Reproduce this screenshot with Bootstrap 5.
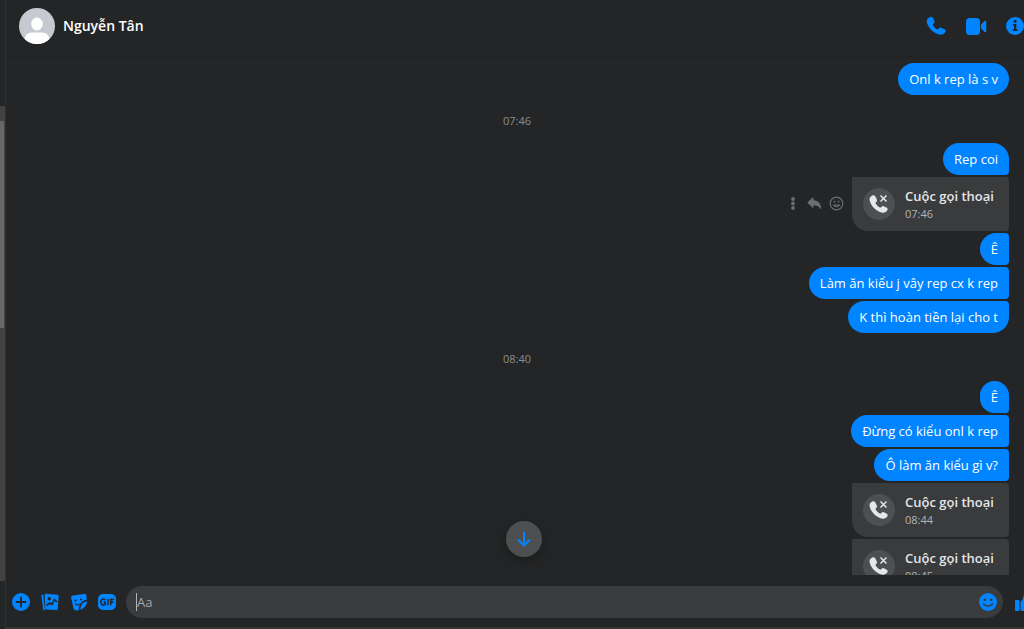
<!DOCTYPE html>
<html lang="vi" data-bs-theme="dark">
<head>
<meta charset="utf-8">
<meta name="viewport" content="width=device-width, initial-scale=1">
<title>Nguyễn Tân</title>
<link href="https://cdn.jsdelivr.net/npm/bootstrap@5.3.0/dist/css/bootstrap.min.css" rel="stylesheet">
<style>
  :root { --chat-bg: #242526; --chat-blue: #0084ff; --chat-grey: #3a3b3c; --chat-text: #e4e6eb; }
  body { background: var(--chat-bg); color: var(--chat-text); font-family: "Open Sans", "Noto Sans", sans-serif; font-size: 13px; line-height: 20px; }
  svg { display: block; }
  .icon-btn { background: none; border: 0; padding: 0; color: var(--chat-blue); flex: none; }
  .rail { width: 6px; border-right: 1px solid #303132; flex: none; }
  .rail-track { width: 5px; margin-top: 106px; margin-bottom: 48px; padding-top: 15px; background: #424242; }
  .rail-thumb { height: 45%; width: 4px; background: #686868; }
  .chat-head { height: 56px; padding: 0 0 4px 13px; box-shadow: 0 1px 2px rgba(0, 0, 0, .1); z-index: 1; }
  .chat-name { font-size: 14px; font-weight: 600; margin: 0 0 0 8px; line-height: 20px; }
  .head-tools { gap: 18px; }
  .log { padding: 7px 15px 0 0; gap: 2px; }
  .bubble { background: var(--chat-blue); color: #fff; padding: 6px 11px; border-radius: 16px 4px 4px 16px; flex: none; }
  .bubble.solo { border-radius: 16px; }
  .bubble.first { border-top-right-radius: 16px; }
  .bubble.last { border-bottom-right-radius: 16px; }
  .stamp { font-size: 11px; font-weight: 500; line-height: 16px; color: #8a8d91; padding: 16px 0 12px 19px; flex: none; align-self: center; }
  .call { background: var(--chat-grey); width: 157px; height: 54px; padding: 0 11px 1px; gap: 10px; border-radius: 0 4px 4px 16px; }
  .call-icon { width: 32px; height: 32px; background: #4e4f50; color: var(--chat-text); flex: none; }
  .call-title { font-weight: 600; line-height: 20px; white-space: nowrap; }
  .call-time { font-size: 11px; line-height: 16px; color: #b0b3b8; }
  .row-tools { gap: 7px; margin-right: 8px; }
  .row-tools .icon-btn { color: #6c6e70; }
  .to-latest { position: absolute; left: 50%; bottom: 18px; margin-left: -9px; width: 36px; height: 36px; background: #4e4f50; border: 0; color: var(--chat-blue); box-shadow: 0 4px 12px rgba(0, 0, 0, .25); }
  .composer { height: 54px; padding: 2px 0 0 5px; gap: 9px; border-bottom: 2px solid #343536; }
  .entry { background: var(--chat-grey); height: 32px; padding: 0 5px 0 10px; margin: 0 2px 0 0; }
  .entry input { background: none; border: 0; outline: 0; padding: 0; color: var(--chat-text); min-width: 0; font-size: 13px; border-left: 1px solid #b0b3b8; height: 18px; }
  .entry input::placeholder { color: #a4a7ab; opacity: 1; }
  .like { margin-right: -10px; }
</style>
</head>
<body>
<div class="d-flex vh-100 overflow-hidden">
  <div class="rail d-flex"><div class="rail-track"><div class="rail-thumb"></div></div></div>

  <main class="d-flex flex-column flex-grow-1 overflow-hidden">
    <header class="chat-head d-flex align-items-center flex-shrink-0 position-relative">
      <svg width="36" height="36" viewBox="0 0 36 36" aria-hidden="true">
        <defs><clipPath id="face"><circle cx="18" cy="18" r="18"/></clipPath></defs>
        <g clip-path="url(#face)"><path fill="#c6c9cf" d="M0 0h36v36H0z"/><ellipse cx="18" cy="16" rx="5.8" ry="6.5" fill="#fff"/><path fill="#fff" d="M5 36c0-8 3-11.500 8-11.500h10c5 0 8 3.500 8 11.500z"/></g>
      </svg>
      <h1 class="chat-name">Nguyễn Tân</h1>
      <div class="head-tools d-flex align-items-center ms-auto">
        <button class="icon-btn" type="button" aria-label="Gọi thoại">
          <svg width="22" height="22" viewBox="0 0 22 22" fill="currentColor"><path d="M4.500 2.300C6 1.300 7.500 1.700 8.300 3.500l1 2.300c.6 1.300.3 2-.7 2.800-.9.800-.9 1.200-.4 2 .9 1.500 1.900 2.500 3.400 3.500.9.600 1.300.5 2-.4.900-1.200 1.600-1.400 2.900-.8l2.700 1.200c1.600.8 1.900 2.100.8 3.500-1.500 2-3.700 2.700-6.100 1.900C8.200 17.700 3.800 13.500 2 8c-.8-2.500-.1-4.400 2.500-5.700z"/></svg>
        </button>
        <button class="icon-btn" type="button" aria-label="Gọi video">
          <svg width="22" height="22" viewBox="0 0 22 22" fill="currentColor"><rect x="1" y="3" width="14" height="17" rx="3.500"/><path d="M16 9.500l3.700-3.500c.6-.6 1.500-.4 1.500.5v10c0 .9-.9 1.100-1.500.5L16 13.500z"/></svg>
        </button>
        <button class="icon-btn" type="button" aria-label="Thông tin">
          <svg width="19" height="22" viewBox="0 0 19 22"><circle cx="10" cy="11" r="9" fill="currentColor"/><path fill="#242526" d="M8 9h3.300v5.200h1V16H7.800v-1.800H9v-3.400H8z"/><circle cx="10.100" cy="6.300" r="1.500" fill="#242526"/></svg>
        </button>
      </div>
    </header>

    <section class="position-relative flex-grow-1 overflow-hidden d-flex flex-column">
      <div class="log d-flex flex-column align-items-end">
        <div class="bubble solo">Onl k rep là s v</div>
        <time class="stamp">07:46</time>
        <div class="bubble first">Rep coi</div>
        <div class="d-flex align-items-center flex-shrink-0">
          <div class="row-tools d-flex align-items-center">
            <button class="icon-btn" type="button" aria-label="Xem thêm"><svg width="14" height="16" viewBox="0 0 14 16" fill="currentColor"><circle cx="7" cy="3" r="1.900"/><circle cx="7" cy="7.500" r="1.900"/><circle cx="7" cy="12" r="1.900"/></svg></button>
            <button class="icon-btn" type="button" aria-label="Trả lời"><svg width="15" height="16" viewBox="0 0 15 16" fill="currentColor"><path d="M6.500 2.300c0-.7-.6-.9-1.100-.5L.8 6.100c-.4.400-.4.800 0 1.200l4.600 4.200c.5.500 1.100.2 1.100-.5V9.300c3 0 5.200.8 6.600 3.300.3.600 1 .4 1-.3C13.900 7.500 11.300 4.500 6.500 4.200z"/></svg></button>
            <button class="icon-btn" type="button" aria-label="Bày tỏ cảm xúc"><svg width="15" height="16" viewBox="0 0 15 16" fill="none" stroke="currentColor" stroke-width="1.200"><circle cx="7.500" cy="7.500" r="6.300"/><path d="M4.500 9c1.300 2.200 4.700 2.200 6 0z"/><path d="M5.500 4.800v1.800M9.500 4.800v1.800" stroke-width="1.500"/></svg></button>
          </div>
          <div class="call d-flex align-items-center">
            <div class="call-icon rounded-circle d-flex align-items-center justify-content-center"><svg width="20" height="20" viewBox="0 0 20 20"><use href="#missed"/></svg></div>
            <div><div class="call-title">Cuộc gọi thoại</div><div class="call-time">07:46</div></div>
          </div>
        </div>
        <div class="bubble">Ê</div>
        <div class="bubble">Làm ăn kiểu j vây rep cx k rep</div>
        <div class="bubble last">K thì hoàn tiền lại cho t</div>
        <time class="stamp">08:40</time>
        <div class="bubble first">Ê</div>
        <div class="bubble">Đừng có kiểu onl k rep</div>
        <div class="bubble">Ô làm ăn kiểu gì v?</div>
        <div class="call d-flex align-items-center flex-shrink-0">
          <div class="call-icon rounded-circle d-flex align-items-center justify-content-center"><svg width="20" height="20" viewBox="0 0 20 20"><use href="#missed"/></svg></div>
          <div><div class="call-title">Cuộc gọi thoại</div><div class="call-time">08:44</div></div>
        </div>
        <div class="call d-flex align-items-center flex-shrink-0">
          <div class="call-icon rounded-circle d-flex align-items-center justify-content-center"><svg width="20" height="20" viewBox="0 0 20 20"><use href="#missed"/></svg></div>
          <div><div class="call-title">Cuộc gọi thoại</div><div class="call-time">08:45</div></div>
        </div>
      </div>
      <button class="to-latest rounded-circle d-flex align-items-center justify-content-center p-0" type="button" aria-label="Xuống tin nhắn mới nhất">
        <svg width="16" height="16" viewBox="0 0 16 16" fill="none" stroke="currentColor" stroke-width="2" stroke-linecap="round" stroke-linejoin="round"><path d="M8 1.500v13M2.500 9L8 14.500 13.500 9"/></svg>
      </button>
    </section>

    <form class="composer d-flex align-items-center flex-shrink-0">
      <button class="icon-btn" type="button" aria-label="Thêm"><svg width="20" height="20" viewBox="0 0 20 20"><circle cx="10" cy="10" r="9" fill="currentColor"/><path d="M10 5.500v9M5.500 10h9" stroke="#242526" stroke-width="1.800" stroke-linecap="round"/></svg></button>
      <button class="icon-btn" type="button" aria-label="Ảnh"><svg width="20" height="20" viewBox="0 0 20 20"><path d="M2.300 3.500L4 17.500" stroke="currentColor" stroke-width="1.800" stroke-linecap="round"/><path fill="currentColor" d="M6 1.800l11.500 1c.9.100 1.300.6 1.200 1.400l-1 12.700c-.1.900-.7 1.300-1.500 1.200L6.500 17.500c-.8-.1-1.200-.5-1.300-1.300L4.600 3.200C4.600 2.200 5 1.700 6 1.800z"/><circle cx="9.300" cy="6.800" r="1.700" fill="#242526"/><path fill="none" stroke="#242526" stroke-width="1.600" stroke-linejoin="round" d="M6.500 13.500l3.200-2.500 2.300 1.500 2.500-5 2.500 2.500"/></svg></button>
      <button class="icon-btn" type="button" aria-label="Nhãn dán"><svg width="20" height="20" viewBox="0 0 20 20"><path fill="currentColor" d="M4 3.500l11-1.600c1.500-.2 2.300.5 2.500 2.100l.3 3.500c-5 1-7.800 4.800-8.100 10.700-2.200.4-4.700.3-5.200-1.900L2.200 6.300C1.900 4.700 2.500 3.800 4 3.500z"/><path fill="currentColor" d="M18 9.200c.2 3.500-2.800 7.300-6.600 8.500 0-4.500 2.300-7.700 6.600-8.500z"/><circle cx="6.500" cy="8.500" r="1" fill="#242526"/><circle cx="12" cy="7.500" r="1" fill="#242526"/><path d="M6.300 11.500c1.200 1.900 3.200 1.900 4.500.4" fill="none" stroke="#242526" stroke-width="1.200"/></svg></button>
      <button class="icon-btn" type="button" aria-label="GIF"><svg width="19" height="20" viewBox="0 0 19 20"><rect x="0" y="2" width="18" height="16" rx="5" fill="currentColor"/><path d="M7.300 7.800C4.800 6 2.800 7.500 2.800 10s2.300 4 4.500 2.500V10.200H5.500M10 6.800v6.500M12.700 13.300V7.500h3.500M12.700 10.300h2.800" fill="none" stroke="#242526" stroke-width="1.500"/></svg></button>
      <div class="entry d-flex align-items-center flex-grow-1 rounded-pill">
        <input class="flex-grow-1" type="text" placeholder="Aa" aria-label="Tin nhắn">
        <button class="icon-btn" type="button" aria-label="Biểu tượng cảm xúc"><svg width="20" height="20" viewBox="0 0 20 20"><circle cx="10" cy="10" r="9" fill="currentColor"/><circle cx="6.800" cy="7.800" r="1.300" fill="#3a3b3c"/><circle cx="13.200" cy="7.800" r="1.300" fill="#3a3b3c"/><path d="M5.500 12c2.500 2.800 6.500 2.800 9 0" fill="none" stroke="#3a3b3c" stroke-width="1.500" stroke-linecap="round"/></svg></button>
      </div>
      <button class="icon-btn like" type="button" aria-label="Thích"><svg width="20" height="20" viewBox="0 0 20 20" fill="currentColor"><rect x="1" y="8" width="4.500" height="11" rx="1"/><path d="M6.500 9.500C9 8 9.500 5 9.800 2.500c.2-1.300 3.200-1.500 3.400 1.500.1 1.500-.3 2.700-.7 4H17c2 0 2.500 1.500 2 3l-1.500 6c-.4 1.300-1.200 2-2.500 2H9c-1 0-1.800-.3-2.500-.8z"/></svg></button>
    </form>
  </main>
</div>
<svg width="0" height="0" class="position-absolute" aria-hidden="true"><defs>
  <g id="missed"><path fill="currentColor" d="M2.500 2C4.200.8 5.800 1.300 6.600 3l1.200 2.500c.5 1.100.2 1.700-.6 2.400-.8.800-.8 1.100-.3 1.900.9 1.500 2 2.500 3.500 3.500.9.500 1.400.4 2.100-.4.700-.9 1.300-1 2.300-.6l2.600 1.300c1.400.7 1.600 1.800.8 3-1.300 1.900-3.500 2.600-5.900 1.800C6.900 16.900 2.500 12.500.9 7.300.1 5 .6 3.300 2.500 2z"/><path d="M11.500 1.500l6 6M17.500 1.500l-6 6" stroke="currentColor" stroke-width="1.500"/></g>
</defs></svg>
<script src="https://cdn.jsdelivr.net/npm/bootstrap@5.3.0/dist/js/bootstrap.bundle.min.js"></script>
</body>
</html></script>
